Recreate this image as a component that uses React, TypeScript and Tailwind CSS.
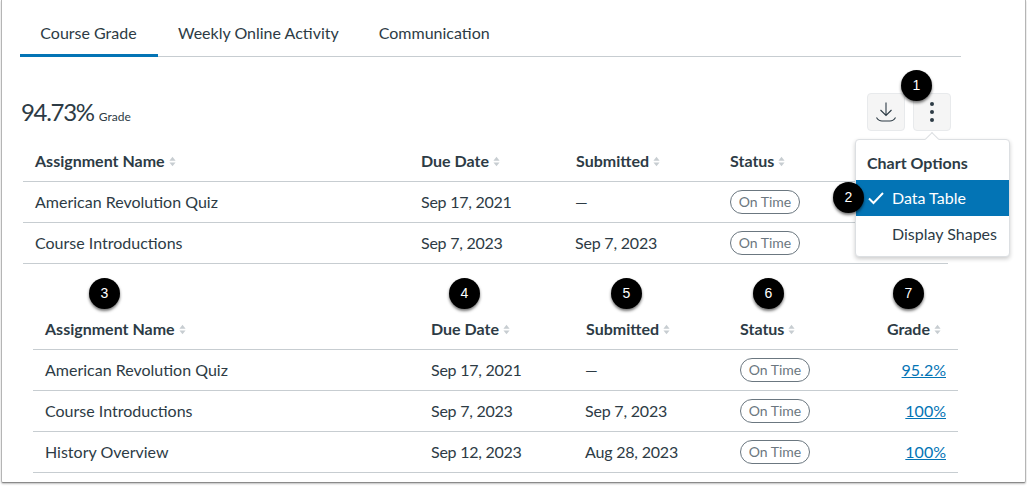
const rows = [
  { name: 'American Revolution Quiz', due: 'Sep 17, 2021', submitted: '—', grade: '95.2%' },
  { name: 'Course Introductions', due: 'Sep 7, 2023', submitted: 'Sep 7, 2023', grade: '100%' },
  { name: 'History Overview', due: 'Sep 12, 2023', submitted: 'Aug 28, 2023', grade: '100%' },
]

const steps = [
  { n: 1, pos: 'left-[901px] top-[70px]' },
  { n: 2, pos: 'left-[833px] top-[182px]' },
  { n: 3, pos: 'left-[89px] top-[278px]' },
  { n: 4, pos: 'left-[449px] top-[278px]' },
  { n: 5, pos: 'left-[611px] top-[278px]' },
  { n: 6, pos: 'left-[753px] top-[278px]' },
  { n: 7, pos: 'left-[893px] top-[278px]' },
]

function SortIcon() {
  return (
    <svg viewBox="0 0 8 12" className="ml-[4px] mt-[1px] h-[11px] w-[7px]" fill="#c7cdd1">
      <path d="M4 0.5 7.5 5H0.5Z" />
      <path d="M4 11.5 7.5 7H0.5Z" />
    </svg>
  )
}

function HeaderCell({ label, right }: { label: string; right?: boolean }) {
  return (
    <div className={`flex items-center font-bold ${right ? 'justify-end pr-[17px]' : 'pl-[12px]'}`}>
      {label}
      <SortIcon />
    </div>
  )
}

function StatusPill() {
  return (
    <span className="flex h-[24px] w-[70px] items-center justify-center rounded-full border border-[#6b7780] pb-[1px] text-[14px] text-[#6b7780]">
      On Time
    </span>
  )
}

function DataTable({ items, withGrade, className }: { items: typeof rows; withGrade?: boolean; className: string }) {
  return (
    <div className={`w-[925px] text-[16px] ${className}`}>
      <div className="grid h-[39px] grid-cols-[386px_155px_154px_130px_100px] border-b border-[#c7cdd1] pb-[3px]">
        <HeaderCell label="Assignment Name" />
        <HeaderCell label="Due Date" />
        <HeaderCell label="Submitted" />
        <HeaderCell label="Status" />
        {withGrade ? <HeaderCell label="Grade" right /> : <div />}
      </div>
      {items.map((row) => (
        <div
          key={row.name}
          className="grid h-[41px] grid-cols-[386px_155px_154px_130px_100px] items-center border-b border-[#c7cdd1]"
        >
          <div className="pl-[12px]">{row.name}</div>
          <div className="pl-[12px] tracking-[-0.25px]">{row.due}</div>
          <div className="pl-[11px] tracking-[-0.2px]">{row.submitted}</div>
          <div className="pl-[12px]">
            <StatusPill />
          </div>
          {withGrade ? (
            <div className="pr-[12px] text-right">
              <a className="text-[#0374b5] underline">{row.grade}</a>
            </div>
          ) : (
            <div />
          )}
        </div>
      ))}
    </div>
  )
}

function ChartMenu() {
  return (
    <div className="absolute left-[855px] top-[139px] h-[118px] w-[155px] rounded-[4px] border border-[#dcdfe2] bg-white shadow-[0_2px_4px_rgba(0,0,0,0.2)]">
      <div className="absolute left-[71px] top-[-6px] h-[10px] w-[10px] rotate-45 border-l border-t border-[#dcdfe2] bg-white" />
      <div className="relative px-[11px] pb-[5px] pt-[11px] text-[16px] font-bold leading-[24px]">Chart Options</div>
      <div className="relative flex h-[36px] items-center bg-[#0374b5] pl-[36px] text-white">
        <svg
          viewBox="0 0 16 16"
          className="absolute left-[12px] h-[16px] w-[16px]"
          fill="none"
          stroke="currentColor"
          strokeWidth="2"
        >
          <path d="M1 8.5 5.5 13 15 3" />
        </svg>
        Data Table
      </div>
      <div className="flex h-[36px] items-center pl-[36px]">Display Shapes</div>
    </div>
  )
}

export default function App() {
  return (
    <div className="relative h-[486px] w-[1027px] overflow-hidden bg-white font-['Lato',sans-serif] text-[16px] text-[#2d3b45]">
      <div className="mb-[2px] ml-[1px] mr-[1px] h-[483px] w-[1025px] rounded-b-[2px] border-x border-b border-x-[#b5b5b5] border-b-[#8a8a8a] shadow-[0_1px_2px_rgba(0,0,0,0.25)]">
        <div className="pl-[18px] pt-[8px]">
          <div className="flex h-[49px] w-[941px] border-b border-[#c7cdd1]">
            <div className="-mb-[1px] flex h-[49px] w-[138px] items-center justify-center border-b-[3px] border-[#0374b5] pr-[1px] pt-[4px]">
              Course Grade
            </div>
            <div className="flex h-[48px] items-center px-[20px] pt-[2px]">Weekly Online Activity</div>
            <div className="flex h-[48px] items-center px-[20px] pt-[2px]">Communication</div>
          </div>

          <div className="mt-[36px] flex h-[38px] w-[931px] items-center justify-between pl-[1px]">
            <div className="flex items-baseline">
              <span className="text-[24px] tracking-[-1.3px]">94.73%</span>
              <span className="ml-[5px] text-[12px]">Grade</span>
            </div>
            <div className="flex gap-[8px]">
              <button
                aria-label="Download"
                className="flex h-[38px] w-[38px] items-center justify-center rounded-[4px] border border-[#e8eaec] bg-[#f5f5f5]"
              >
                <svg viewBox="0 0 20 20" className="h-[20px] w-[20px]" fill="none" stroke="#2d3b45" strokeWidth="1.1">
                  <path d="M10 0.5V13.5M4.5 8 10 13.5 15.5 8" />
                  <path d="M0.5 15.5C2 18 4 19 6 19H14C16 19 18 18 19.5 15.5" />
                </svg>
              </button>
              <button
                aria-label="More"
                className="flex h-[38px] w-[38px] flex-col items-center justify-center gap-[4px] rounded-[4px] border border-[#e8eaec] bg-[#f5f5f5]"
              >
                <span className="h-[4px] w-[4px] rounded-full bg-[#2d3b45]" />
                <span className="h-[4px] w-[4px] rounded-full bg-[#2d3b45]" />
                <span className="h-[4px] w-[4px] rounded-full bg-[#2d3b45]" />
              </button>
            </div>
          </div>

          <DataTable items={rows.slice(0, 2)} className="ml-[3px] mt-[12px]" />
          <DataTable items={rows} withGrade className="ml-[13px] mt-[47px]" />
        </div>
      </div>

      <ChartMenu />

      {steps.map((s) => (
        <div
          key={s.n}
          className={`absolute flex h-[31px] w-[31px] items-center justify-center rounded-full bg-black font-['Liberation_Sans',sans-serif] text-[14px] text-white shadow-[0_2px_3px_rgba(0,0,0,0.55)] ${s.pos}`}
        >
          {s.n}
        </div>
      ))}
    </div>
  )
}
